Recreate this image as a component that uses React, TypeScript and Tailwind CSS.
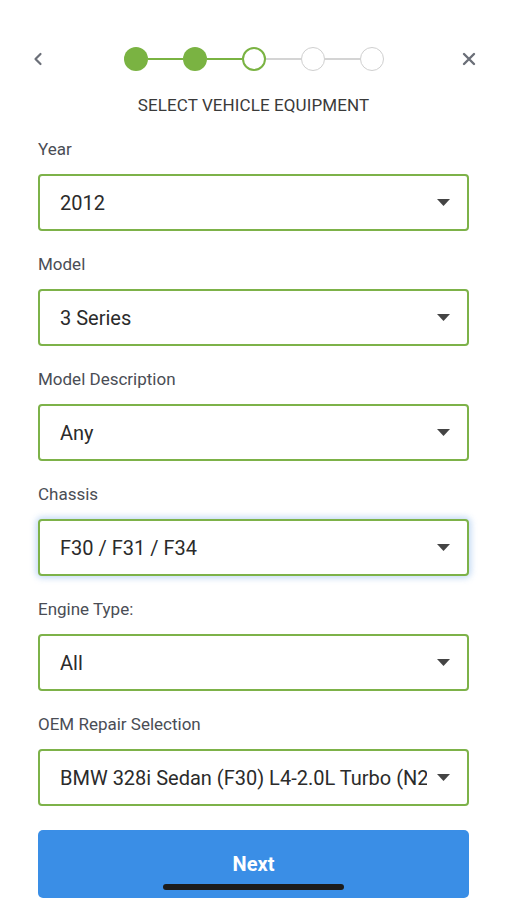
import React from "react";

const fields = [
  { label: "Year", value: "2012" },
  { label: "Model", value: "3 Series" },
  { label: "Model Description", value: "Any" },
  { label: "Chassis", value: "F30 / F31 / F34", focus: true },
  { label: "Engine Type:", value: "All" },
  { label: "OEM Repair Selection", value: "BMW 328i Sedan (F30) L4-2.0L Turbo (N20)" },
];

function Caret() {
  return (
    <svg width="13" height="7" viewBox="0 0 13 7" className="shrink-0">
      <path d="M0 0 L13 0 L6.5 7 Z" fill="#444" />
    </svg>
  );
}

export default function App() {
  return (
    <div
      className="w-[507px] h-[900px] bg-white overflow-hidden relative"
      style={{ fontFamily: "Roboto, 'Liberation Sans', sans-serif" }}
    >
      <div className="flex items-center justify-between h-[24px] mt-[47px] pl-[31px] pr-[31px]">
        <svg width="14" height="14" viewBox="0 0 14 14">
          <path d="M9.5 2 L4.5 7 L9.5 12" fill="none" stroke="#6b6f78" strokeWidth="2.2" strokeLinecap="round" strokeLinejoin="round" />
        </svg>
        <div className="flex items-center ml-[1px]">
          <div className="w-[24px] h-[24px] rounded-full bg-[#7ab342]" />
          <div className="w-[35px] h-[2px] bg-[#7ab342]" />
          <div className="w-[24px] h-[24px] rounded-full bg-[#7ab342]" />
          <div className="w-[35px] h-[2px] bg-[#7ab342]" />
          <div className="w-[24px] h-[24px] rounded-full border-[2.5px] border-[#7ab342] bg-white" />
          <div className="w-[35px] h-[2px] bg-[#d4d4d4]" />
          <div className="w-[24px] h-[24px] rounded-full border-[1.5px] border-[#cfcfcf] bg-white" />
          <div className="w-[35px] h-[2px] bg-[#d4d4d4]" />
          <div className="w-[24px] h-[24px] rounded-full border-[1.5px] border-[#cfcfcf] bg-white" />
        </div>
        <svg width="14" height="14" viewBox="0 0 14 14">
          <path d="M2 2 L12 12 M12 2 L2 12" fill="none" stroke="#6b6f78" strokeWidth="2.4" strokeLinecap="round" />
        </svg>
      </div>

      <div className="text-center text-[17px] leading-[20px] text-[#3a3a3a] mt-[24px] tracking-[0.1px]">
        SELECT VEHICLE EQUIPMENT
      </div>

      <div className="px-[38px] mt-[24px] flex flex-col gap-[23px]">
        {fields.map((f) => (
          <div key={f.label} className="flex flex-col">
            <div className="text-[17px] leading-[20px] text-[#4a4d55]">{f.label}</div>
            <div
              className={
                "mt-[15px] h-[57px] rounded-[4px] border-2 border-[#7db249] bg-white flex items-center pl-[20px] pr-[17px] gap-[10px] " +
                (f.focus ? "shadow-[0_0_6px_2px_rgba(120,170,230,0.45)]" : "")
              }
            >
              <div className="flex-1 overflow-hidden whitespace-nowrap text-[20px] text-[#2b2b2b]">
                {f.value}
              </div>
              <Caret />
            </div>
          </div>
        ))}
      </div>

      <div className="mx-[38px] mt-[24px] h-[68px] rounded-[5px] bg-[#3a8ee6] flex items-center justify-center">
        <span className="text-white text-[20px] font-bold">Next</span>
      </div>

      <div className="absolute left-[163px] top-[884px] w-[181px] h-[6px] rounded-full bg-[#1c1c1c]" />
    </div>
  );
}
